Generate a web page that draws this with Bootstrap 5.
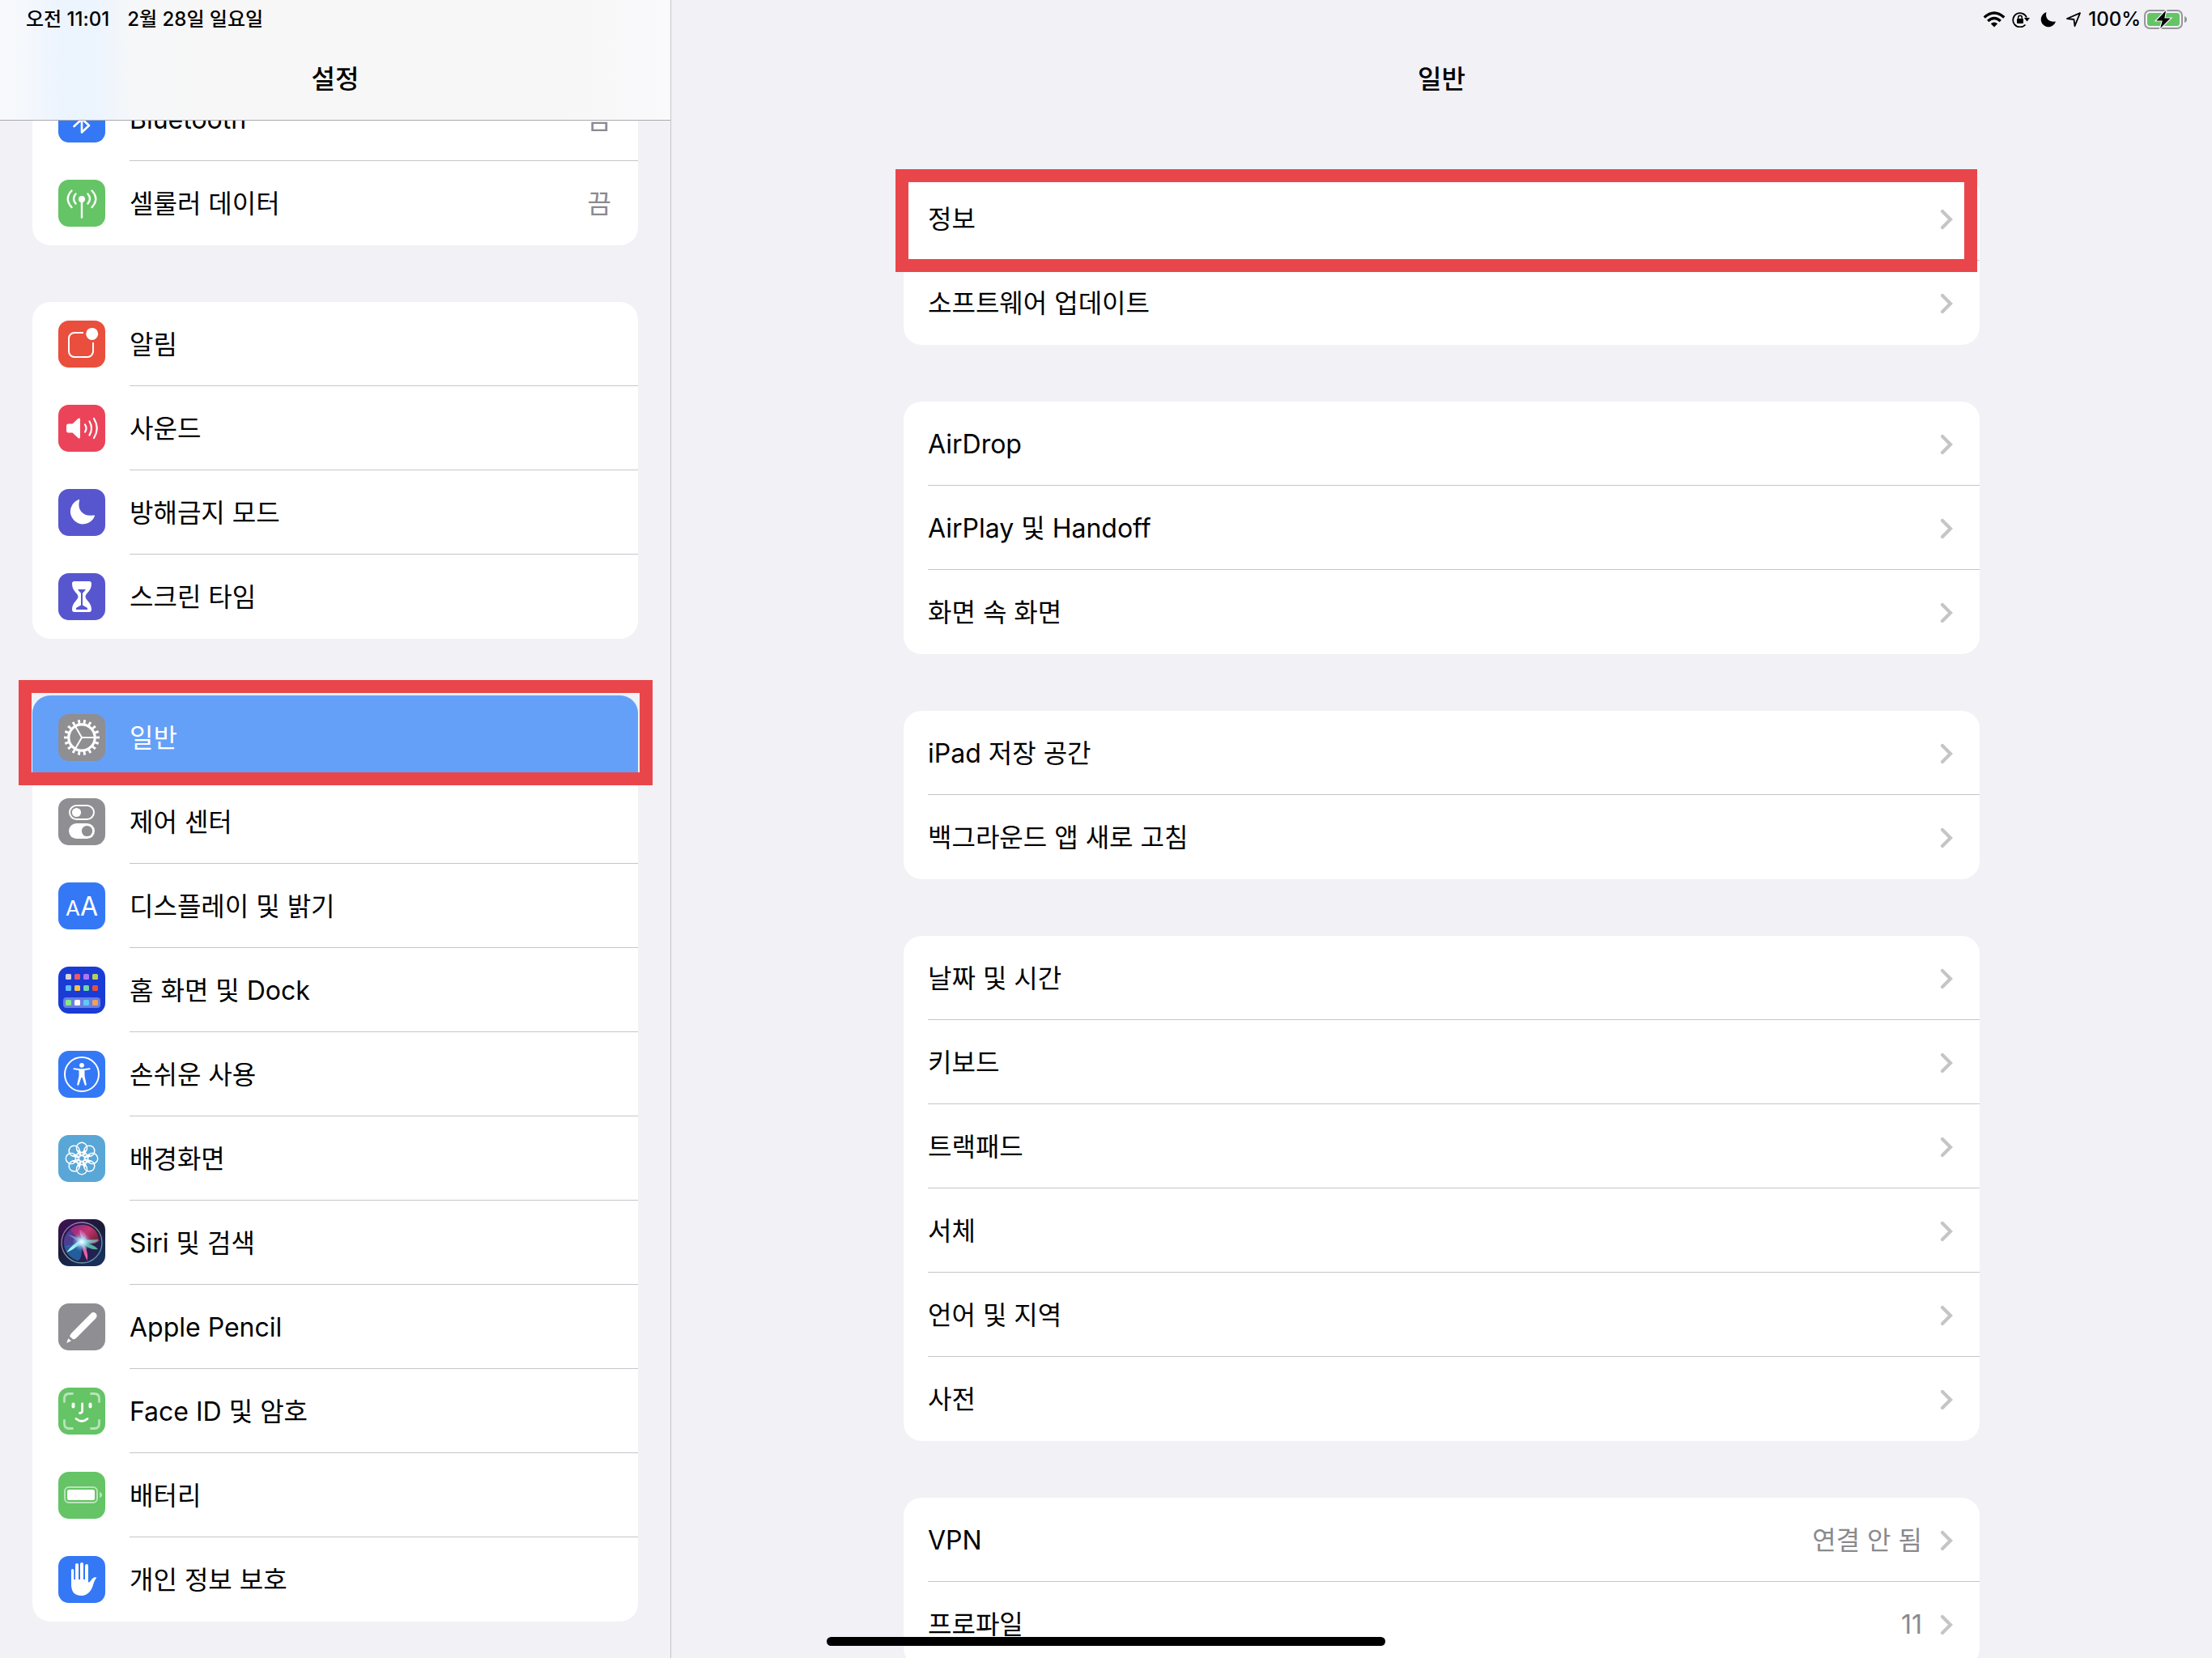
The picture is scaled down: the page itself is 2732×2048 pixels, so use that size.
<!DOCTYPE html>
<html lang="ko">
<head>
<meta charset="utf-8">
<meta name="viewport" content="width=device-width, initial-scale=1">
<title>설정</title>
<link href="https://cdn.jsdelivr.net/npm/bootstrap@5.3.0/dist/css/bootstrap.min.css" rel="stylesheet">
<style>
  body {
    font-family: Inter, "Noto Sans CJK KR", sans-serif;
    font-size: 32px;
    line-height: 48px;
    color: #000;
    background: #f1f1f6;
  }
  .sidebar { width: 829px; border-right: 1px solid #c6c6c8; }
  .pane-head { height: 148px; flex: none; }
  .sidebar .pane-head {
    position: relative;
    z-index: 2;
    height: 149px;
    border-bottom: 1px solid #a9a9b0;
    background: linear-gradient(90deg, #f8f9fc 0, #f5f8fc 32px, #ecf4fe 75px, #ecf4fe 115px, #f5f7f9 160px, #f7f7f7 240px, #f7f7f7 700px, #fafafc 100%);
  }
  .status-row { height: 48px; padding: 0 30px 0 32px; font-size: 24px; line-height: 48px; font-weight: 500; }
  .status-row .date-text { margin-left: 22px; }
  .pane-title { font-size: 32px; line-height: 48px; font-weight: 500; margin: 0; padding-top: 26px; text-align: center; }
  .sidebar-list { padding: 0 40px; margin-top: -54px; gap: 70px; }
  .detail-list { padding: 70px 287px 0; gap: 70px; }
  .list-group { --bs-list-group-border-radius: 22px; flex: none; }
  .list-group-item { --bs-list-group-color: #000; --bs-list-group-action-color: #000; height: 104px; padding: 0 0 0 32px; border: 0; }
  .detail-list .list-group-item { padding-left: 30px; }
  .list-group-item.active { background: #64a0f8; color: #fff; margin: 0; }
  .tile { width: 58px; height: 58px; border-radius: 13px; flex: none; margin-right: 30px; overflow: hidden; }
  .cell-body { border-bottom: 1px solid #c6c6c8; padding: 2px 33px 0 0; }
  .list-group-item:last-child .cell-body, .active .cell-body { border-color: transparent; }
  .cell-value { color: #8a8a8e; }
  .chevron { width: 16px; height: 26px; margin-left: 22px; }
  .marked::after { content: ""; position: absolute; border: 16px solid #e9464b; z-index: 3; pointer-events: none; }
  .sidebar .marked::after { inset: -19px -18px -7px -17px; }
  .detail-list .marked::after { inset: -9px 3px -14px -10px; }
  .marked { z-index: 3; }
  .home-bar { position: fixed; left: 50%; bottom: 15px; width: 690px; height: 11px; margin-left: -345px; border-radius: 6px; background: #000; z-index: 5; }
</style>
<script src="https://cdn.jsdelivr.net/npm/bootstrap@5.3.0/dist/js/bootstrap.bundle.min.js"></script>
</head>
<body>
<svg width="0" height="0" class="position-absolute" aria-hidden="true">
  <symbol id="chev" viewBox="0 0 16 26"><path d="M3 3l10 10L3 23" fill="none" stroke="#c5c5c7" stroke-width="4.2" stroke-linecap="round" stroke-linejoin="miter"/></symbol>
</svg>

<div class="d-flex vh-100 overflow-hidden">
  <aside class="sidebar d-flex flex-column flex-shrink-0 overflow-hidden">
    <header class="pane-head">
      <div class="status-row d-flex"><span>오전 11:01</span><span class="date-text">2월 28일 일요일</span></div>
      <h1 class="pane-title">설정</h1>
    </header>
    <nav class="sidebar-list d-flex flex-column">
      <div class="list-group">
        <a href="#" class="list-group-item list-group-item-action d-flex align-items-center">
          <svg class="tile" viewBox="0 0 58 58"><rect width="58" height="58" fill="#3478f6"/><path d="M19.500 38L38 21 29 12.500V45.500L38 37 19.500 20" fill="none" stroke="#fff" stroke-width="2.600" stroke-linecap="round" stroke-linejoin="round"/></svg>
          <span class="cell-body d-flex align-items-center flex-grow-1 h-100"><span class="flex-grow-1">Bluetooth</span><span class="cell-value">끔</span></span>
        </a>
        <a href="#" class="list-group-item list-group-item-action d-flex align-items-center">
          <svg class="tile" viewBox="0 0 58 58"><rect width="58" height="58" fill="#65c466"/><g fill="none" stroke="#fff" stroke-width="2.400" stroke-linecap="round"><path d="M29 24V46.500"/><path d="M21.500 17.500Q16.500 23.500 21.500 29.500M36.500 17.500Q41.500 23.500 36.500 29.500M16.500 13.500Q7 23.500 16.500 34M41.500 13.500Q51 23.500 41.500 34"/></g><circle cx="29" cy="24" r="4" fill="#fff"/></svg>
          <span class="cell-body d-flex align-items-center flex-grow-1 h-100"><span class="flex-grow-1">셀룰러 데이터</span><span class="cell-value">끔</span></span>
        </a>
      </div>

      <div class="list-group">
        <a href="#" class="list-group-item list-group-item-action d-flex align-items-center">
          <svg class="tile" viewBox="0 0 58 58"><rect width="58" height="58" fill="#ea4e3d"/><path d="M31 15H20a7 7 0 0 0-7 7V38a7 7 0 0 0 7 7H36a7 7 0 0 0 7-7V27" fill="none" stroke="#fff" stroke-width="2"/><circle cx="41.700" cy="16.400" r="7.500" fill="#fff"/></svg>
          <span class="cell-body d-flex align-items-center flex-grow-1 h-100">알림</span>
        </a>
        <a href="#" class="list-group-item list-group-item-action d-flex align-items-center">
          <svg class="tile" viewBox="0 0 58 58"><rect width="58" height="58" fill="#eb445a"/><path d="M12.500 23.500H17.500L24.500 17Q27 15.500 27 18V40Q27 42.500 24.500 41L17.500 34.500H12.500Q10 34.500 10 32V26Q10 23.500 12.500 23.500z" fill="#fff"/><path d="M33 24.500Q36 29 33 33.500M38.500 20.500Q43.500 29 38.500 37.500M44 17Q51.500 29 44 41" fill="none" stroke="#fff" stroke-width="2.200" stroke-linecap="round"/></svg>
          <span class="cell-body d-flex align-items-center flex-grow-1 h-100">사운드</span>
        </a>
        <a href="#" class="list-group-item list-group-item-action d-flex align-items-center">
          <svg class="tile" viewBox="0 0 58 58"><rect width="58" height="58" fill="#5856ce"/><path d="M25.500 13C26.800 12.500 26 14 25.800 15.500C23.500 26 31 34.500 43 32.500C45 32.200 45.300 32.500 45 33.500A15.600 15.600 0 1 1 25.500 13z" fill="#fff"/></svg>
          <span class="cell-body d-flex align-items-center flex-grow-1 h-100">방해금지 모드</span>
        </a>
        <a href="#" class="list-group-item list-group-item-action d-flex align-items-center">
          <svg class="tile" viewBox="0 0 58 58"><rect width="58" height="58" fill="#5856ce"/><path d="M20 10H38Q41 10 41 13C41 22.500 33.500 24.500 33.500 29S41 35.500 41 45Q41 48 38 48H20Q17 48 17 45C17 35.500 24.500 33.500 24.500 29S17 22.500 17 13Q17 10 20 10z" fill="#fff"/><path d="M24 20H34Q31 24 30 24.500V39.500L36 43V45H22V43L28 39.500V24.500Q27 24 24 20z" fill="#5856ce"/></svg>
          <span class="cell-body d-flex align-items-center flex-grow-1 h-100">스크린 타임</span>
        </a>
      </div>

      <div class="list-group">
        <a href="#" class="list-group-item list-group-item-action active marked d-flex align-items-center" aria-current="true">
          <svg class="tile" viewBox="0 0 58 58"><rect width="58" height="58" fill="#8e8e93"/><g fill="none" stroke="#fff"><circle cx="29" cy="29" r="16.200" stroke-width="3.200"/><circle cx="29" cy="29" r="19.500" stroke-width="5" pathLength="360" stroke-dasharray="8.500 11.500" stroke-dashoffset="4.250"/><path d="M29 29H44M29 29L21.500 16M29 29L21.500 42" stroke-width="2"/></g></svg>
          <span class="cell-body d-flex align-items-center flex-grow-1 h-100">일반</span>
        </a>
        <a href="#" class="list-group-item list-group-item-action d-flex align-items-center">
          <svg class="tile" viewBox="0 0 58 58"><rect width="58" height="58" fill="#8e8e93"/><rect x="14" y="9" width="30" height="17" rx="8.500" fill="none" stroke="#fff" stroke-width="2"/><circle cx="22.500" cy="17.500" r="5.600" fill="#fff"/><rect x="13" y="31" width="32" height="19" rx="9.500" fill="#fff"/><circle cx="35.500" cy="40.500" r="6.600" fill="#8e8e93"/></svg>
          <span class="cell-body d-flex align-items-center flex-grow-1 h-100">제어 센터</span>
        </a>
        <a href="#" class="list-group-item list-group-item-action d-flex align-items-center">
          <svg class="tile" viewBox="0 0 58 58"><rect width="58" height="58" fill="#3478f6"/><text x="9" y="41" font-family="Inter, sans-serif" font-size="26" fill="#fff">A</text><text x="27" y="41" font-family="Inter, sans-serif" font-size="32" fill="#fff">A</text></svg>
          <span class="cell-body d-flex align-items-center flex-grow-1 h-100">디스플레이 및 밝기</span>
        </a>
        <a href="#" class="list-group-item list-group-item-action d-flex align-items-center">
          <svg class="tile" viewBox="0 0 58 58"><rect width="58" height="58" fill="#1a3bd4"/><rect x="6" y="38" width="46" height="13" rx="4" fill="#fff" opacity=".35"/>
            <g><rect x="9" y="9" width="7" height="7" rx="1.500" fill="#d6d6d4"/><rect x="20" y="9" width="7" height="7" rx="1.500" fill="#ea5a66"/><rect x="31" y="9" width="7" height="7" rx="1.500" fill="#b175f2"/><rect x="42" y="9" width="7" height="7" rx="1.500" fill="#b5d056"/>
            <rect x="9" y="23" width="7" height="7" rx="1.500" fill="#5bbdf8"/><rect x="20" y="23" width="7" height="7" rx="1.500" fill="#f6c244"/><rect x="31" y="23" width="7" height="7" rx="1.500" fill="#6fd6a8"/><rect x="42" y="23" width="7" height="7" rx="1.500" fill="#ea4e3d"/>
            <rect x="9" y="41" width="7" height="7" rx="1.500" fill="#84ea84"/><rect x="20" y="41" width="7" height="7" rx="1.500" fill="#fff"/><rect x="31" y="41" width="7" height="7" rx="1.500" fill="#5fc9f8"/><rect x="42" y="41" width="7" height="7" rx="1.500" fill="#f0a05a"/></g></svg>
          <span class="cell-body d-flex align-items-center flex-grow-1 h-100">홈 화면 및 Dock</span>
        </a>
        <a href="#" class="list-group-item list-group-item-action d-flex align-items-center">
          <svg class="tile" viewBox="0 0 58 58"><rect width="58" height="58" fill="#3478f6"/><circle cx="29" cy="29" r="21" fill="none" stroke="#fff" stroke-width="2"/><circle cx="29" cy="17.800" r="2.900" fill="#fff"/><path d="M19 21.200L27 22.200H31L39 21.200Q40.500 22.500 39 23L32.500 24.300V31L34.800 41.500Q34.500 43.500 32.800 42.500L29.600 33H28.400L25.200 42.500Q23.500 43.500 23.200 41.500L25.500 31V24.300L19 23Q17.500 22.500 19 21.200z" fill="#fff"/></svg>
          <span class="cell-body d-flex align-items-center flex-grow-1 h-100">손쉬운 사용</span>
        </a>
        <a href="#" class="list-group-item list-group-item-action d-flex align-items-center">
          <svg class="tile" viewBox="0 0 58 58"><defs><path id="petal" d="M27.200 25.800L23.600 19.500A6.500 6.500 0 1 1 34.400 19.500L30.800 25.800M23.600 19.500Q29 23.500 34.400 19.500"/></defs><rect width="58" height="58" fill="#59a7d7"/><g fill="none" stroke="#fff" stroke-width="1.600"><circle cx="29" cy="29" r="3.600"/><use href="#petal"/><use href="#petal" transform="rotate(45 29 29)"/><use href="#petal" transform="rotate(90 29 29)"/><use href="#petal" transform="rotate(135 29 29)"/><use href="#petal" transform="rotate(180 29 29)"/><use href="#petal" transform="rotate(225 29 29)"/><use href="#petal" transform="rotate(270 29 29)"/><use href="#petal" transform="rotate(315 29 29)"/></g></svg>
          <span class="cell-body d-flex align-items-center flex-grow-1 h-100">배경화면</span>
        </a>
        <a href="#" class="list-group-item list-group-item-action d-flex align-items-center">
          <svg class="tile" viewBox="0 0 58 58">
            <defs>
              <linearGradient id="sbg" x1="0" y1="0" x2=".6" y2="1"><stop offset="0" stop-color="#431058"/><stop offset=".5" stop-color="#1b1b36"/><stop offset="1" stop-color="#18305a"/></linearGradient>
              <linearGradient id="sring" x1="0" y1="0" x2="1" y2="1"><stop offset="0" stop-color="#b060c8"/><stop offset=".55" stop-color="#7d9a9c"/><stop offset="1" stop-color="#5a86b8"/></linearGradient>
              <radialGradient id="sglow"><stop offset="0" stop-color="#fff"/><stop offset=".3" stop-color="#b8f0ff" stop-opacity=".8"/><stop offset="1" stop-color="#5fb0e8" stop-opacity="0"/></radialGradient>
              <linearGradient id="spink" x1="0" y1="0" x2="1" y2=".6"><stop offset="0" stop-color="#8a2a90"/><stop offset=".6" stop-color="#d63a78"/><stop offset="1" stop-color="#8e2440"/></linearGradient>
            </defs>
            <rect width="58" height="58" fill="url(#sbg)"/><circle cx="29" cy="29" r="23" fill="#252050"/>
            <path d="M14 13Q24 4 37 8Q50 13 50 27L29 29Z" fill="url(#spink)" opacity=".9"/>
            <path d="M14 13Q5 22 7 32Q13 40 29 29Z" fill="#56439c" opacity=".85"/>
            <path d="M7 33Q10 46 23 51Q30 52 29 29Z" fill="#2468a8" opacity=".85"/>
            <path d="M29 29L26 13Q36 16 35 29L51 26Q42 34 29 29Z" fill="#e86bb0" opacity=".65"/>
            <path d="M29 26L50 25Q46 29 36 30Q45 32 49 37Q39 39 29 29Z" fill="#62d6b0" opacity=".8"/>
            <path d="M28 29Q19 38 10 41Q17 31 29 25Z" fill="#a8eef5"/>
            <path d="M29 28Q38 40 36 51Q32 46 28 29Z" fill="#eb5fa5"/>
            <path d="M12 19L29 24L26 15L34 25L43 26L34 30L35 39L29 32L23 34L25 28Z" fill="#b8d0ff" opacity=".45"/>
            <circle cx="29" cy="28" r="12" fill="url(#sglow)"/><circle cx="29" cy="29" r="25" fill="none" stroke="url(#sring)" stroke-width="1.300"/></svg>
          <span class="cell-body d-flex align-items-center flex-grow-1 h-100">Siri 및 검색</span>
        </a>
        <a href="#" class="list-group-item list-group-item-action d-flex align-items-center">
          <svg class="tile" viewBox="0 0 58 58"><rect width="58" height="58" fill="#8e8e93"/><path d="M40.500 12.200Q43.500 9.800 46.300 12.300Q49 15.200 46.300 18.500L22.500 42.500Q21 44 18.500 44.500L14.200 41Q14.500 38.500 16.500 36.500z" fill="#fff"/><path d="M12.300 43.300L16 46.300L10.200 49z" fill="#fff"/></svg>
          <span class="cell-body d-flex align-items-center flex-grow-1 h-100">Apple Pencil</span>
        </a>
        <a href="#" class="list-group-item list-group-item-action d-flex align-items-center">
          <svg class="tile" viewBox="0 0 58 58"><rect width="58" height="58" fill="#65c466"/><g fill="none" stroke="#fff" stroke-linecap="round"><path d="M7.500 17.500V13.500Q7.500 7.500 13.500 7.500H17.500M40.500 7.500H44.500Q50.500 7.500 50.500 13.500V17.500M50.500 40.500V44.500Q50.500 50.500 44.500 50.500H40.500M17.500 50.500H13.500Q7.500 50.500 7.500 44.500V40.500" stroke-width="2.800" opacity=".55"/><path d="M18.500 20.500V23.500M39.500 20.500V23.500" stroke-width="4"/><path d="M29.600 20V28.500Q29.600 31.500 26.500 31.500M22 38.500Q29 44.500 36 38.500" stroke-width="2.800"/></g></svg>
          <span class="cell-body d-flex align-items-center flex-grow-1 h-100">Face ID 및 암호</span>
        </a>
        <a href="#" class="list-group-item list-group-item-action d-flex align-items-center">
          <svg class="tile" viewBox="0 0 58 58"><rect width="58" height="58" fill="#65c466"/><g opacity=".55"><rect x="8" y="19" width="40" height="19" rx="5" fill="none" stroke="#fff" stroke-width="2"/><path d="M51 25Q54 26 54 28.500T51 32z" fill="#fff"/></g><rect x="11" y="22" width="34" height="13" rx="2.500" fill="#fff"/></svg>
          <span class="cell-body d-flex align-items-center flex-grow-1 h-100">배터리</span>
        </a>
        <a href="#" class="list-group-item list-group-item-action d-flex align-items-center">
          <svg class="tile" viewBox="0 0 58 58"><rect width="58" height="58" fill="#3478f6"/><g stroke="#fff" stroke-linecap="round"><path d="M17.600 17.500V36" stroke-width="3.200"/><path d="M23 11V32M29 10V32M35 12V32" stroke-width="4"/></g><path d="M16 29H37V32.500Q38.500 33 40 30.500Q43.500 25 47.300 26.500Q44.500 30.500 43.500 34C41.500 42 37 49 28.500 49C20 49 16 44 16 35z" fill="#fff"/></svg>
          <span class="cell-body d-flex align-items-center flex-grow-1 h-100">개인 정보 보호</span>
        </a>
      </div>
    </nav>
  </aside>

  <main class="flex-grow-1 d-flex flex-column overflow-hidden">
    <header class="pane-head">
      <div class="status-row d-flex justify-content-end align-items-center">
        <svg width="28" height="20" viewBox="0 0 28 20" class="me-2"><g fill="none" stroke="#000" stroke-width="3.400"><path d="M1.700 7.500Q14-3.500 26.300 7.500M6.200 12Q14 5 21.800 12"/></g><path d="M9.800 15.200Q14 11.800 18.200 15.200L14 19.500z"/></svg>
        <svg width="22" height="20" viewBox="0 0 22 20" class="me-2"><path d="M16.500 16.500A8.700 8.700 0 1 1 18 7.500" fill="none" stroke="#000" stroke-width="1.800"/><path d="M14.800 8H22L18.600 12.500z"/><rect x="6" y="9" width="8" height="6" rx="1"/><path d="M7.700 9.500V7.500a2.300 2.300 0 0 1 4.600 0v2" fill="none" stroke="#000" stroke-width="1.500"/></svg>
        <svg width="28" height="20" viewBox="-6 0 28 20" class="me-2"><path d="M6.500 1C4.500 8 9 14 18 12.500A9.300 9.300 0 1 1 6.500 1z"/></svg>
        <svg width="20" height="20" viewBox="0 0 20 20" class="me-2"><path d="M18 2.200L11.500 18.200 10.500 10 2 9z" fill="none" stroke="#000" stroke-width="1.800" stroke-linejoin="round"/></svg>
        <span class="me-1">100%</span>
        <svg width="54" height="26" viewBox="0 0 54 26"><rect x="1" y="2" width="46" height="22" rx="6" fill="none" stroke="#96969a" stroke-width="2"/><rect x="4" y="5" width="40" height="16" rx="3.500" fill="#65c466"/><path d="M50 9Q53 10 53 13T50 17z" fill="#96969a"/><path d="M28 0L14 15H22L19 26L34 11H26z" fill="#000" stroke="#f1f1f6" stroke-width="1.200"/></svg>
      </div>
      <h2 class="pane-title">일반</h2>
    </header>
    <div class="detail-list d-flex flex-column">
      <div class="list-group">
        <a href="#" class="list-group-item list-group-item-action marked"><span class="cell-body d-flex align-items-center h-100"><span class="flex-grow-1">정보</span><svg class="chevron"><use href="#chev"/></svg></span></a>
        <a href="#" class="list-group-item list-group-item-action"><span class="cell-body d-flex align-items-center h-100"><span class="flex-grow-1">소프트웨어 업데이트</span><svg class="chevron"><use href="#chev"/></svg></span></a>
      </div>
      <div class="list-group">
        <a href="#" class="list-group-item list-group-item-action"><span class="cell-body d-flex align-items-center h-100"><span class="flex-grow-1">AirDrop</span><svg class="chevron"><use href="#chev"/></svg></span></a>
        <a href="#" class="list-group-item list-group-item-action"><span class="cell-body d-flex align-items-center h-100"><span class="flex-grow-1">AirPlay 및 Handoff</span><svg class="chevron"><use href="#chev"/></svg></span></a>
        <a href="#" class="list-group-item list-group-item-action"><span class="cell-body d-flex align-items-center h-100"><span class="flex-grow-1">화면 속 화면</span><svg class="chevron"><use href="#chev"/></svg></span></a>
      </div>
      <div class="list-group">
        <a href="#" class="list-group-item list-group-item-action"><span class="cell-body d-flex align-items-center h-100"><span class="flex-grow-1">iPad 저장 공간</span><svg class="chevron"><use href="#chev"/></svg></span></a>
        <a href="#" class="list-group-item list-group-item-action"><span class="cell-body d-flex align-items-center h-100"><span class="flex-grow-1">백그라운드 앱 새로 고침</span><svg class="chevron"><use href="#chev"/></svg></span></a>
      </div>
      <div class="list-group">
        <a href="#" class="list-group-item list-group-item-action"><span class="cell-body d-flex align-items-center h-100"><span class="flex-grow-1">날짜 및 시간</span><svg class="chevron"><use href="#chev"/></svg></span></a>
        <a href="#" class="list-group-item list-group-item-action"><span class="cell-body d-flex align-items-center h-100"><span class="flex-grow-1">키보드</span><svg class="chevron"><use href="#chev"/></svg></span></a>
        <a href="#" class="list-group-item list-group-item-action"><span class="cell-body d-flex align-items-center h-100"><span class="flex-grow-1">트랙패드</span><svg class="chevron"><use href="#chev"/></svg></span></a>
        <a href="#" class="list-group-item list-group-item-action"><span class="cell-body d-flex align-items-center h-100"><span class="flex-grow-1">서체</span><svg class="chevron"><use href="#chev"/></svg></span></a>
        <a href="#" class="list-group-item list-group-item-action"><span class="cell-body d-flex align-items-center h-100"><span class="flex-grow-1">언어 및 지역</span><svg class="chevron"><use href="#chev"/></svg></span></a>
        <a href="#" class="list-group-item list-group-item-action"><span class="cell-body d-flex align-items-center h-100"><span class="flex-grow-1">사전</span><svg class="chevron"><use href="#chev"/></svg></span></a>
      </div>
      <div class="list-group">
        <a href="#" class="list-group-item list-group-item-action"><span class="cell-body d-flex align-items-center h-100"><span class="flex-grow-1">VPN</span><span class="cell-value">연결 안 됨</span><svg class="chevron"><use href="#chev"/></svg></span></a>
        <a href="#" class="list-group-item list-group-item-action"><span class="cell-body d-flex align-items-center h-100"><span class="flex-grow-1">프로파일</span><span class="cell-value">11</span><svg class="chevron"><use href="#chev"/></svg></span></a>
      </div>
    </div>
  </main>
</div>
<div class="home-bar"></div>
</body>
</html>
